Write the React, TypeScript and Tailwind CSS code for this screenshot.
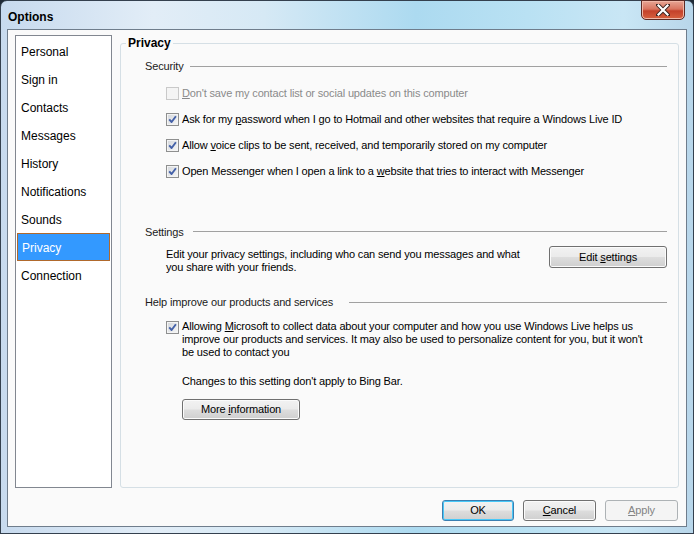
import React from "react";

const items = ["Personal", "Sign in", "Contacts", "Messages", "History", "Notifications", "Sounds", "Privacy", "Connection"];

function Check({ checked = true, disabled = false }: { checked?: boolean; disabled?: boolean }) {
  return (
    <span
      className={`flex h-[13px] w-[13px] shrink-0 items-center justify-center border ${
        disabled ? "border-[#c9c9c9] bg-[#f4f4f4]" : "border-[#8e8f8f] bg-[linear-gradient(135deg,#d3d6db,#f7f7f7)] shadow-[inset_0_0_0_1px_#f4f4f4]"
      }`}
    >
      {checked && (
        <svg width="9" height="9" viewBox="0 0 9 9">
          <path d="M1.2 4.4 L3.6 7 L7.9 1.2" fill="none" stroke="#4461a8" strokeWidth="1.9" strokeLinejoin="round" />
        </svg>
      )}
    </span>
  );
}

function Button({
  children,
  className = "",
  primary = false,
  disabled = false,
}: {
  children: React.ReactNode;
  className?: string;
  primary?: boolean;
  disabled?: boolean;
}) {
  const look = disabled
    ? "border-[#adb2b5] bg-[#f4f4f4] text-[#838383]"
    : primary
      ? "border-[#3c7fb1] bg-[linear-gradient(180deg,#f2f2f2_0%,#ebebeb_48%,#dddddd_52%,#cfcfcf_100%)] shadow-[inset_0_0_0_1px_#48c8f8] text-black"
      : "border-[#707070] bg-[linear-gradient(180deg,#f2f2f2_0%,#ebebeb_48%,#dddddd_52%,#cfcfcf_100%)] shadow-[inset_0_0_0_1px_#fbfbfb] text-black";
  return (
    <div className={`flex items-center justify-center rounded-[3px] border leading-none ${look} ${className}`}>
      {children}
    </div>
  );
}

function Heading({ label, gap, className = "" }: { label: string; gap: string; className?: string }) {
  return (
    <div className={`flex items-center ${gap} ${className}`}>
      <span className="text-[#1b1b1b]">{label}</span>
      <span className="h-px flex-1 bg-[#a0a0a0]" />
    </div>
  );
}

export default function App() {
  return (
    <div className="h-[534px] w-[694px] bg-[#1f2a36] font-['Liberation_Sans',Arial,sans-serif] text-[11px] tracking-[-0.15px] text-black">
      <div className="flex h-full flex-col rounded-t-[7px] border border-[#34404e] bg-[linear-gradient(90deg,#c7daee_0%,#e2edf7_22%,#d6e9f5_38%,#acdaf0_60%,#b9e1f3_76%,#c9e6f5_90%,#b8d6ea_100%)]">
        <div className="relative h-[28px] shrink-0">
          <span className="absolute left-[7px] top-[7px] text-[12px] font-bold tracking-normal text-black">Options</span>
          <div className="absolute right-[8px] top-[-1px] flex h-[20px] w-[44px] items-center justify-center rounded-b-[5px] border border-[#5e2a24] bg-[linear-gradient(180deg,#e7a595_0%,#d9745f_45%,#c4412a_55%,#d7613f_100%)] shadow-[inset_0_0_0_1px_#f0b8a8]">
            <svg width="14" height="12" viewBox="0 0 14 12">
              <path d="M2 1 L12 11 M12 1 L2 11" stroke="#3a2320" strokeWidth="4" strokeLinecap="square" />
              <path d="M2.5 1.5 L11.5 10.5 M11.5 1.5 L2.5 10.5" stroke="#ffffff" strokeWidth="2.2" strokeLinecap="square" />
            </svg>
          </div>
        </div>

        <div className="mx-[6px] mb-[6px] flex flex-1 flex-col border border-[#6f7d8c] bg-[#fafafa] px-[7px] pt-[5px]">
          <div className="flex h-[453px] gap-[8px]">
            <ul className="w-[97px] shrink-0 border border-[#828790] bg-white p-px text-[12px] tracking-normal">
              {items.map((it) => (
                <li
                  key={it}
                  className={`flex h-[28px] items-center pl-[4px] pt-px ${
                    it === "Privacy" ? "border border-[#b0692c] bg-[#3399ff] pl-[3px] text-white" : ""
                  }`}
                >
                  {it}
                </li>
              ))}
            </ul>

            <fieldset className="mt-[1px] flex-1 rounded-[3px] border border-[#d5dfe5]">
              <legend className="ml-[5px] px-[2px] text-[12px] font-bold leading-[14px] tracking-normal">Privacy</legend>

              <div className="pl-[24px] pr-[11px]">
                <Heading label="Security" gap="gap-[6px]" className="mt-[8px]" />
                <div className="mt-[6px] pl-[21px]">
                  <div className="flex h-[26px] items-center gap-[3px] text-[#8a8a8a]">
                    <Check checked={false} disabled />
                    <span>
                      <u>D</u>on't save my contact list or social updates on this computer
                    </span>
                  </div>
                  <div className="flex h-[26px] items-center gap-[3px]">
                    <Check />
                    <span>
                      Ask for my <u>p</u>assword when I go to Hotmail and other websites that require a Windows Live ID
                    </span>
                  </div>
                  <div className="flex h-[26px] items-center gap-[3px]">
                    <Check />
                    <span>
                      Allow <u>v</u>oice clips to be sent, received, and temporarily stored on my computer
                    </span>
                  </div>
                  <div className="flex h-[26px] items-center gap-[3px]">
                    <Check />
                    <span>
                      Open Messenger when I open a link to a <u>w</u>ebsite that tries to interact with Messenger
                    </span>
                  </div>
                </div>

                <Heading label="Settings" gap="gap-[9px]" className="mt-[39px]" />
                <div className="mt-[8px] flex items-start pl-[21px]">
                  <p className="w-[370px] leading-[13px]">
                    Edit your privacy settings, including who can send you messages and what you share with your friends.
                  </p>
                  <Button className="ml-auto mt-[-2px] h-[22px] w-[118px]">
                    Edit&nbsp;<u>s</u>ettings
                  </Button>
                </div>

                <Heading label="Help improve our products and services" gap="gap-[16px]" className="mt-[20px]" />
                <div className="mt-[9px] flex items-start gap-[3px] pl-[21px]">
                  <span className="mt-[1px]">
                    <Check />
                  </span>
                  <div className="w-[470px]">
                    <p className="leading-[13px]">
                      Allowing <u>M</u>icrosoft to collect data about your computer and how you use Windows Live helps us
                      improve our products and services. It may also be used to personalize content for you, but it won't
                      be used to contact you
                    </p>
                    <p className="mt-[16px] leading-[13px]">Changes to this setting don't apply to Bing Bar.</p>
                    <Button className="mt-[11px] h-[21px] w-[118px]">
                      More&nbsp;<u>i</u>nformation
                    </Button>
                  </div>
                </div>
              </div>
            </fieldset>
          </div>

          <div className="flex justify-end gap-[9px] pr-[1px] pt-[12px]">
            <Button primary className="h-[21px] w-[72px]">
              OK
            </Button>
            <Button className="h-[21px] w-[73px]">
              <u>C</u>ancel
            </Button>
            <Button disabled className="h-[21px] w-[73px]">
              <u>A</u>pply
            </Button>
          </div>
        </div>
      </div>
    </div>
  );
}
